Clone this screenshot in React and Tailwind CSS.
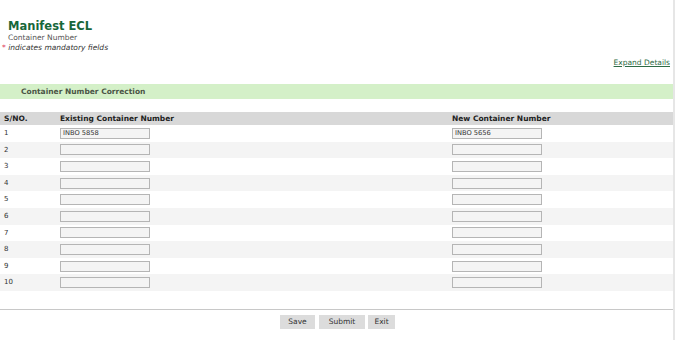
import React from "react";

const rows = [
    { no: 1, existing: "INBO 5858", next: "INBO 5656" },
    { no: 2, existing: "", next: "" },
    { no: 3, existing: "", next: "" },
    { no: 4, existing: "", next: "" },
    { no: 5, existing: "", next: "" },
    { no: 6, existing: "", next: "" },
    { no: 7, existing: "", next: "" },
    { no: 8, existing: "", next: "" },
    { no: 9, existing: "", next: "" },
    { no: 10, existing: "", next: "" },
];

const inputClassName =
    "h-[11px] w-[90px] border border-[#b5b5b5] bg-[#f4f4f4] px-[2px] text-[6.7px] leading-[9px] text-[#333] outline-none";

const buttonClassName = "h-[14px] bg-[#dcdcdc] text-center text-[7.5px] leading-[14px] text-[#333]";

const App = () => {
    return (
        <div className="flex h-[340px] w-[679px] bg-white font-['DejaVu_Sans',Verdana,sans-serif]">
            <div className="w-[673px] pt-[20px]">
                <div className="pl-[8px]">
                    <h1 className="text-[11.5px] font-bold leading-[13px] text-[#17673a]">Manifest ECL</h1>
                    <p className="text-[7.5px] leading-[10px] text-[#555]">Container Number</p>
                </div>
                <p className="pl-[2px] text-[7.5px] italic leading-[10px] text-[#333]">
                    <span className="text-[#e0405a]">*</span> indicates mandatory fields
                </p>

                <div className="mt-[5px] flex justify-end pr-[3px]">
                    <a href="#" className="text-[7.5px] leading-[10px] text-[#2e6b45] underline">
                        Expand Details
                    </a>
                </div>

                <div className="mt-[16px] h-[15px] bg-[#d4f0c8] pl-[21px] text-[7.5px] font-bold leading-[15px] text-[#4b5546]">
                    Container Number Correction
                </div>

                <div className="mt-[13px]">
                    <div className="flex h-[13px] items-center bg-[#d8d8d8] text-[7.5px] font-bold text-[#222]">
                        <span className="w-[60px] pl-[4px]">S/NO.</span>
                        <span className="w-[392px]">Existing Container Number</span>
                        <span>New Container Number</span>
                    </div>
                    {rows.map((row) => (
                        <div
                            key={row.no}
                            className={`flex h-[16.6px] items-center text-[7px] text-[#333] ${
                                row.no % 2 === 0 ? "bg-[#f4f4f4]" : "bg-white"
                            }`}
                        >
                            <span className="w-[60px] pl-[4px]">{row.no}</span>
                            <div className="w-[392px]">
                                <input readOnly value={row.existing} className={inputClassName} />
                            </div>
                            <input readOnly value={row.next} className={inputClassName} />
                        </div>
                    ))}
                </div>

                <div className="mt-[18px] border-t border-[#c8c8c8]" />
                <div className="mt-[5px] flex justify-center pl-[2px]">
                    <button type="button" className={`${buttonClassName} w-[35px]`}>Save</button>
                    <button type="button" className={`${buttonClassName} ml-[4px] w-[46px]`}>Submit</button>
                    <button type="button" className={`${buttonClassName} ml-[3px] w-[27px]`}>Exit</button>
                </div>
            </div>
            <div className="w-[2px] bg-[#e6e6e6]" />
        </div>
    );
};

export default App;
